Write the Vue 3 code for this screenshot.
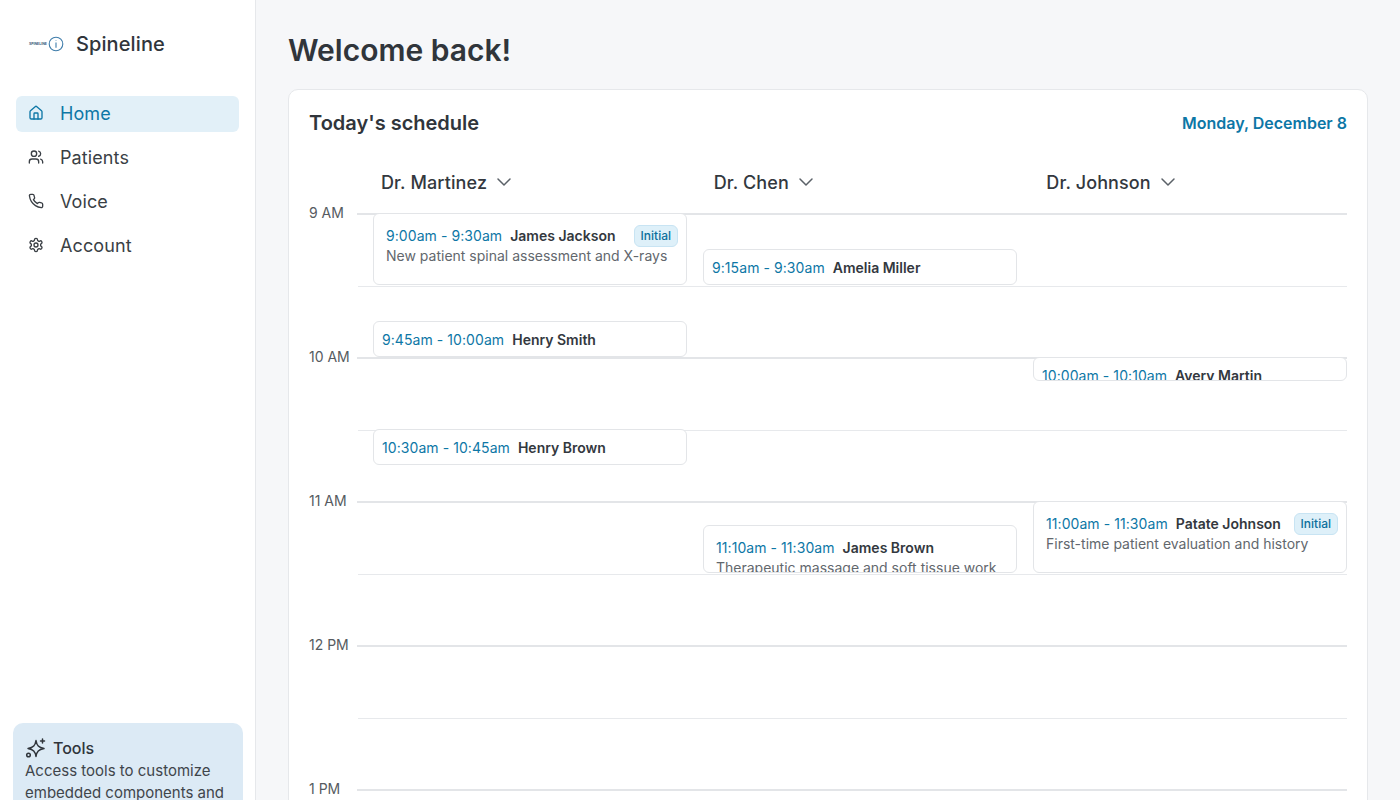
<script setup>
const navItems = [
  { label: 'Home', icon: 'home', active: true },
  { label: 'Patients', icon: 'users' },
  { label: 'Voice', icon: 'phone' },
  { label: 'Account', icon: 'cog' },
]

const doctors = ['Dr. Martinez', 'Dr. Chen', 'Dr. Johnson']

const rows = [
  { label: '9 AM' }, {},
  { label: '10 AM' }, {},
  { label: '11 AM' }, {},
  { label: '12 PM' }, {},
  { label: '1 PM' }, {},
]

// start is minutes after 9 AM
const columns = [
  [
    { start: 0, mins: 30, time: '9:00am - 9:30am', name: 'James Jackson', note: 'New patient spinal assessment and X-rays', initial: true },
    { start: 45, mins: 15, time: '9:45am - 10:00am', name: 'Henry Smith' },
    { start: 90, mins: 15, time: '10:30am - 10:45am', name: 'Henry Brown' },
  ],
  [
    { start: 15, mins: 15, time: '9:15am - 9:30am', name: 'Amelia Miller' },
    { start: 130, mins: 20, time: '11:10am - 11:30am', name: 'James Brown', note: 'Therapeutic massage and soft tissue work' },
  ],
  [
    { start: 60, mins: 10, time: '10:00am - 10:10am', name: 'Avery Martin' },
    { start: 120, mins: 30, time: '11:00am - 11:30am', name: 'Patate Johnson', note: 'First-time patient evaluation and history', initial: true },
  ],
]

function eventStyle(ev) {
  return { top: ev.start * 2.4 + 'px', height: ev.mins * 2.4 + 'px' }
}
</script>

<template>
  <div class="app">
    <aside class="sidebar">
      <div class="brand">
        <div class="logo">
          <span class="logo-text">SPINELINE</span>
          <svg width="16" height="16" viewBox="0 0 16 16" fill="none" stroke="#3f7dab" stroke-width="1.1">
            <circle cx="8" cy="8" r="6.8" />
            <path d="M8 4.2v.6M8 6.5v5.2" />
          </svg>
        </div>
        <span class="brand-name">Spineline</span>
      </div>

      <nav class="nav">
        <a v-for="item in navItems" :key="item.label" :class="['nav-item', { active: item.active }]">
          <svg class="nav-icon" viewBox="0 0 24 24" fill="none" stroke="currentColor" stroke-width="2" stroke-linecap="round" stroke-linejoin="round">
            <template v-if="item.icon === 'home'">
              <path d="M15 21v-8a1 1 0 0 0-1-1h-4a1 1 0 0 0-1 1v8" />
              <path d="M3 10a2 2 0 0 1 .709-1.528l7-5.999a2 2 0 0 1 2.582 0l7 5.999A2 2 0 0 1 21 10v9a2 2 0 0 1-2 2H5a2 2 0 0 1-2-2z" />
            </template>
            <template v-else-if="item.icon === 'users'">
              <path d="M16 21v-2a4 4 0 0 0-4-4H6a4 4 0 0 0-4 4v2" />
              <circle cx="9" cy="7" r="4" />
              <path d="M22 21v-2a4 4 0 0 0-3-3.87" />
              <path d="M16 3.13a4 4 0 0 1 0 7.75" />
            </template>
            <template v-else-if="item.icon === 'phone'">
              <path d="M22 16.92v3a2 2 0 0 1-2.18 2 19.79 19.79 0 0 1-8.63-3.07 19.5 19.5 0 0 1-6-6 19.79 19.79 0 0 1-3.07-8.67A2 2 0 0 1 4.11 2h3a2 2 0 0 1 2 1.72 12.84 12.84 0 0 0 .7 2.81 2 2 0 0 1-.45 2.11L8.09 9.91a16 16 0 0 0 6 6l1.27-1.27a2 2 0 0 1 2.11-.45 12.84 12.84 0 0 0 2.81.7A2 2 0 0 1 22 16.92z" />
            </template>
            <template v-else>
              <path d="M12.22 2h-.44a2 2 0 0 0-2 2v.18a2 2 0 0 1-1 1.73l-.43.25a2 2 0 0 1-2 0l-.15-.08a2 2 0 0 0-2.73.73l-.22.38a2 2 0 0 0 .73 2.73l.15.1a2 2 0 0 1 1 1.72v.51a2 2 0 0 1-1 1.74l-.15.09a2 2 0 0 0-.73 2.73l.22.38a2 2 0 0 0 2.73.73l.15-.08a2 2 0 0 1 2 0l.43.25a2 2 0 0 1 1 1.73V20a2 2 0 0 0 2 2h.44a2 2 0 0 0 2-2v-.18a2 2 0 0 1 1-1.73l.43-.25a2 2 0 0 1 2 0l.15.08a2 2 0 0 0 2.73-.73l.22-.39a2 2 0 0 0-.73-2.73l-.15-.08a2 2 0 0 1-1-1.74v-.5a2 2 0 0 1 1-1.74l.15-.09a2 2 0 0 0 .73-2.73l-.22-.38a2 2 0 0 0-2.73-.73l-.15.08a2 2 0 0 1-2 0l-.43-.25a2 2 0 0 1-1-1.73V4a2 2 0 0 0-2-2z" />
              <circle cx="12" cy="12" r="3" />
            </template>
          </svg>
          <span>{{ item.label }}</span>
        </a>
      </nav>

      <div class="tools">
        <div class="tools-title">
          <svg width="21" height="21" viewBox="0 0 21 21" fill="none" stroke="currentColor" stroke-width="1.5" stroke-linejoin="round" stroke-linecap="round">
            <path d="M11 2.500c.8 5 2.600 7 8 8-5.400 1-7.200 3-8 8-.8-5-2.600-7-8-8 5.400-1 7.200-3 8-8z" />
            <path d="M17.500 1v4M15.500 3h4" />
            <circle cx="3.500" cy="17" r="1.800" />
          </svg>
          <span>Tools</span>
        </div>
        <p>Access tools to customize embedded components and data</p>
      </div>
    </aside>

    <main class="main">
      <h1>Welcome back!</h1>
      <section class="card">
        <div class="card-head">
          <h2>Today's schedule</h2>
          <span class="date">Monday, December 8</span>
        </div>

        <div class="doctors">
          <div v-for="doc in doctors" :key="doc" class="doctor">
            <span>{{ doc }}</span>
            <svg width="18" height="18" viewBox="0 0 24 24" fill="none" stroke="currentColor" stroke-width="2" stroke-linecap="round" stroke-linejoin="round">
              <path d="m4 8 8 8 8-8" />
            </svg>
          </div>
        </div>

        <div class="timeline">
          <div v-for="(row, i) in rows" :key="i" class="row">
            <span class="hour">{{ row.label }}</span>
            <div :class="['line', { strong: row.label }]"></div>
          </div>

          <div class="columns">
            <div v-for="(col, c) in columns" :key="c" class="column">
              <div
                v-for="ev in col"
                :key="ev.time"
                :class="['event', { short: ev.mins <= 15 }]"
                :style="eventStyle(ev)"
              >
                <div class="event-top">
                  <span class="time">{{ ev.time }}</span>
                  <span class="name">{{ ev.name }}</span>
                  <span v-if="ev.initial" class="badge">Initial</span>
                </div>
                <div v-if="ev.note" class="note">{{ ev.note }}</div>
              </div>
            </div>
          </div>
        </div>
      </section>
    </main>
  </div>
</template>

<style>
body {
  margin: 0;
  overflow: hidden;
}
</style>

<style scoped>
.app {
  display: flex;
  height: 100vh;
  overflow: hidden;
  background: #f6f7f9;
  color: #30353b;
  font-family: Inter, "Liberation Sans", sans-serif;
}

.sidebar {
  width: 256px;
  flex-shrink: 0;
  display: flex;
  flex-direction: column;
  box-sizing: border-box;
  background: #fff;
  border-right: 1px solid #e6e8eb;
}

.brand {
  display: flex;
  align-items: center;
  gap: 12px;
  height: 40px;
  margin: 24px 0 0 24px;
}

.logo {
  width: 40px;
  display: flex;
  align-items: center;
  justify-content: flex-end;
  gap: 1px;
}

.logo-text {
  font-size: 3.500px;
  font-weight: 700;
  color: #3b5f80;
  white-space: nowrap;
}

.brand-name {
  font-size: 20px;
  font-weight: 500;
  letter-spacing: 0.1px;
  color: #30353b;
}

.nav {
  flex: 1;
  display: flex;
  flex-direction: column;
  gap: 8px;
  margin: 32px 16px 0;
}

.nav-item {
  display: flex;
  align-items: center;
  gap: 16px;
  box-sizing: border-box;
  height: 36px;
  padding: 0 12px 2px;
  border-radius: 6px;
  font-size: 18px;
  letter-spacing: 0.1px;
  color: #3a3f45;
}

.nav-item.active {
  background: #e2f0f8;
  color: #0d77a6;
}

.nav-icon {
  width: 16px;
  height: 16px;
  flex-shrink: 0;
}

.tools {
  flex-shrink: 0;
  height: 110px;
  box-sizing: border-box;
  margin: 0 12px -33px 13px;
  padding: 13px 12px;
  border-radius: 10px;
  background: #dceaf5;
}

.tools-title {
  display: flex;
  align-items: center;
  gap: 7px;
  height: 24px;
  font-size: 16px;
  font-weight: 500;
}

.tools p {
  margin: 0;
  font-size: 15px;
  line-height: 22px;
  color: #3f454b;
}

.main {
  flex: 1;
  min-width: 0;
  padding: 30px 32px 0;
}

h1 {
  margin: 0 0 19px;
  height: 40px;
  font-size: 30px;
  line-height: 40px;
  font-weight: 600;
  color: #30353b;
}

.card {
  box-sizing: border-box;
  background: #fff;
  border: 1px solid #e6e8eb;
  border-radius: 10px;
  padding: 19px 20px;
}

.card-head {
  display: flex;
  align-items: center;
  justify-content: space-between;
  height: 28px;
}

h2 {
  margin: 0;
  font-size: 20px;
  font-weight: 600;
  color: #30353b;
}

.date {
  font-size: 16px;
  font-weight: 600;
  color: #0d77a6;
}

.doctors {
  display: grid;
  grid-template-columns: repeat(3, 332.67px);
  margin: 21px 0 7px 72px;
  height: 48px;
}

.doctor {
  display: flex;
  align-items: center;
  gap: 8px;
  font-size: 18px;
  font-weight: 500;
  letter-spacing: 0.12px;
  color: #33383e;
}

.doctor svg {
  color: #5b6168;
}

.timeline {
  position: relative;
}

.row {
  display: flex;
  height: 72px;
}

.hour {
  width: 48px;
  flex-shrink: 0;
  margin-top: -10px;
  height: 20px;
  line-height: 20px;
  font-size: 14px;
  color: #565b61;
}

.line {
  flex: 1;
  height: 1px;
  margin: 1px 0 0 1px;
  background: #e7e9ec;
}

.line.strong {
  height: 2px;
  margin: 0;
  background: #e3e5e8;
}

.columns {
  position: absolute;
  top: 0;
  left: 49px;
  right: 0;
  display: grid;
  grid-template-columns: 330px 330px 1fr;
}

.column {
  position: relative;
}

.event {
  position: absolute;
  left: 15px;
  width: 314px;
  box-sizing: border-box;
  overflow: hidden;
  padding: 11px 8px 0 12px;
  background: #fff;
  border: 1px solid #e3e5e8;
  border-radius: 6px;
}

.event.short {
  padding: 7px 8px 0 8px;
}

.event-top {
  display: flex;
  align-items: center;
  height: 20px;
  gap: 8px;
  font-size: 14px;
  white-space: nowrap;
}

.time {
  letter-spacing: 0.07px;
  color: #0d77a6;
}

.name {
  font-weight: 600;
  color: #33383e;
}

.badge {
  margin: 2px 0 0 auto;
  padding: 0 6px;
  height: 22px;
  line-height: 20px;
  box-sizing: border-box;
  font-size: 12px;
  font-weight: 500;
  color: #0d6f9c;
  background: #def0f9;
  border: 1px solid #c8e4f3;
  border-radius: 6px;
}

.note {
  margin-top: 1px;
  font-size: 14px;
  line-height: 20px;
  white-space: nowrap;
  color: #62676d;
}
</style>
